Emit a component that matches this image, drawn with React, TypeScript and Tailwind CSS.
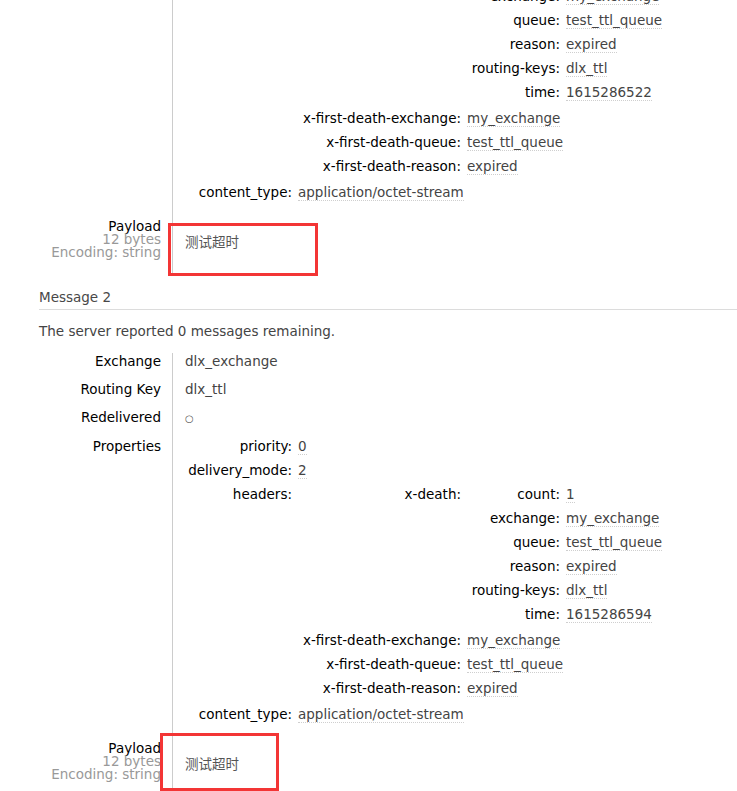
type Val = string | Field[];
type Field = { k: string; v: Val };

const widths = [113, 169, 99];

function props(time: string): Field[] {
  return [
    { k: "priority", v: "0" },
    { k: "delivery_mode", v: "2" },
    {
      k: "headers",
      v: [
        {
          k: "x-death",
          v: [
            { k: "count", v: "1" },
            { k: "exchange", v: "my_exchange" },
            { k: "queue", v: "test_ttl_queue" },
            { k: "reason", v: "expired" },
            { k: "routing-keys", v: "dlx_ttl" },
            { k: "time", v: time },
          ],
        },
        { k: "x-first-death-exchange", v: "my_exchange" },
        { k: "x-first-death-queue", v: "test_ttl_queue" },
        { k: "x-first-death-reason", v: "expired" },
      ],
    },
    { k: "content_type", v: "application/octet-stream" },
  ];
}

const messages = [
  { n: 1, remaining: 1, time: "1615286522" },
  { n: 2, remaining: 0, time: "1615286594" },
];

function PropTable({ fields, level }: { fields: Field[]; level: number }) {
  const w = widths[level];
  return (
    <div>
      {fields.map((f) => (
        <div key={f.k} className="grid" style={{ gridTemplateColumns: `${w}px 1fr` }}>
          <div className="text-right pr-[6px] leading-[17px] text-black whitespace-nowrap">{f.k}:</div>
          {typeof f.v === "string" ? (
            <div className="pb-[7px]">
              <span className="inline-block leading-[16px] border-b border-dotted border-[#cfcfcf] text-[#444] whitespace-nowrap">
                {f.v}
              </span>
            </div>
          ) : (
            <div className="pb-[2px]">
              <PropTable fields={f.v} level={level + 1} />
            </div>
          )}
        </div>
      ))}
    </div>
  );
}

function Row({ label, children }: { label: string; children: React.ReactNode }) {
  return (
    <div className="grid grid-cols-[133px_1fr]">
      <div className="text-right pr-[11px] leading-[17px] text-black">{label}</div>
      <div className="border-l border-[#ccc] pl-[12px] pb-[11px] leading-[17px] text-[#444]">{children}</div>
    </div>
  );
}

function Message({ n, remaining, time }: { n: number; remaining: number; time: string }) {
  return (
    <section className={n > 1 ? "mt-[15px]" : ""}>
      <h2 className="leading-[17px] pb-[3px] border-b border-[#dcdcdc] text-[#484848]">Message {n}</h2>
      <p className="mt-[13px] leading-[17px] text-[#444]">
        The server reported {remaining} messages remaining.
      </p>
      <div className="mt-[13px]">
        <Row label="Exchange">dlx_exchange</Row>
        <Row label="Routing Key">dlx_ttl</Row>
        <Row label="Redelivered">
          <span className="text-[10px] text-[#555]">○</span>
        </Row>
        <Row label="Properties">
          <PropTable fields={props(time)} level={0} />
        </Row>
        <div className="grid grid-cols-[133px_1fr]">
          <div className="text-right pr-[11px] pt-[1px] leading-[13px]">
            <div className="text-black">Payload</div>
            <div className="text-[#999]">12 bytes</div>
            <div className="text-[#999]">Encoding: string</div>
          </div>
          <div className="border-l border-[#ccc] pl-[12px] pt-[15px] h-[55px] leading-[17px] text-[#555]">
            测试超时
          </div>
        </div>
      </div>
    </section>
  );
}

export default function App() {
  return (
    <div className="relative h-[791px] overflow-hidden bg-white font-['DejaVu_Sans','Noto_Sans_CJK_SC',sans-serif] text-[13.5px]">
      <div className="mt-[-233px] pl-[39px]">
        {messages.map((m) => (
          <Message key={m.n} {...m} />
        ))}
      </div>
      <div className="absolute left-[168px] top-[223px] w-[150px] h-[53px] border-[3px] border-[#f33535]" />
      <div className="absolute left-[160px] top-[733px] w-[119px] h-[58px] border-[3px] border-[#f33535]" />
    </div>
  );
}
